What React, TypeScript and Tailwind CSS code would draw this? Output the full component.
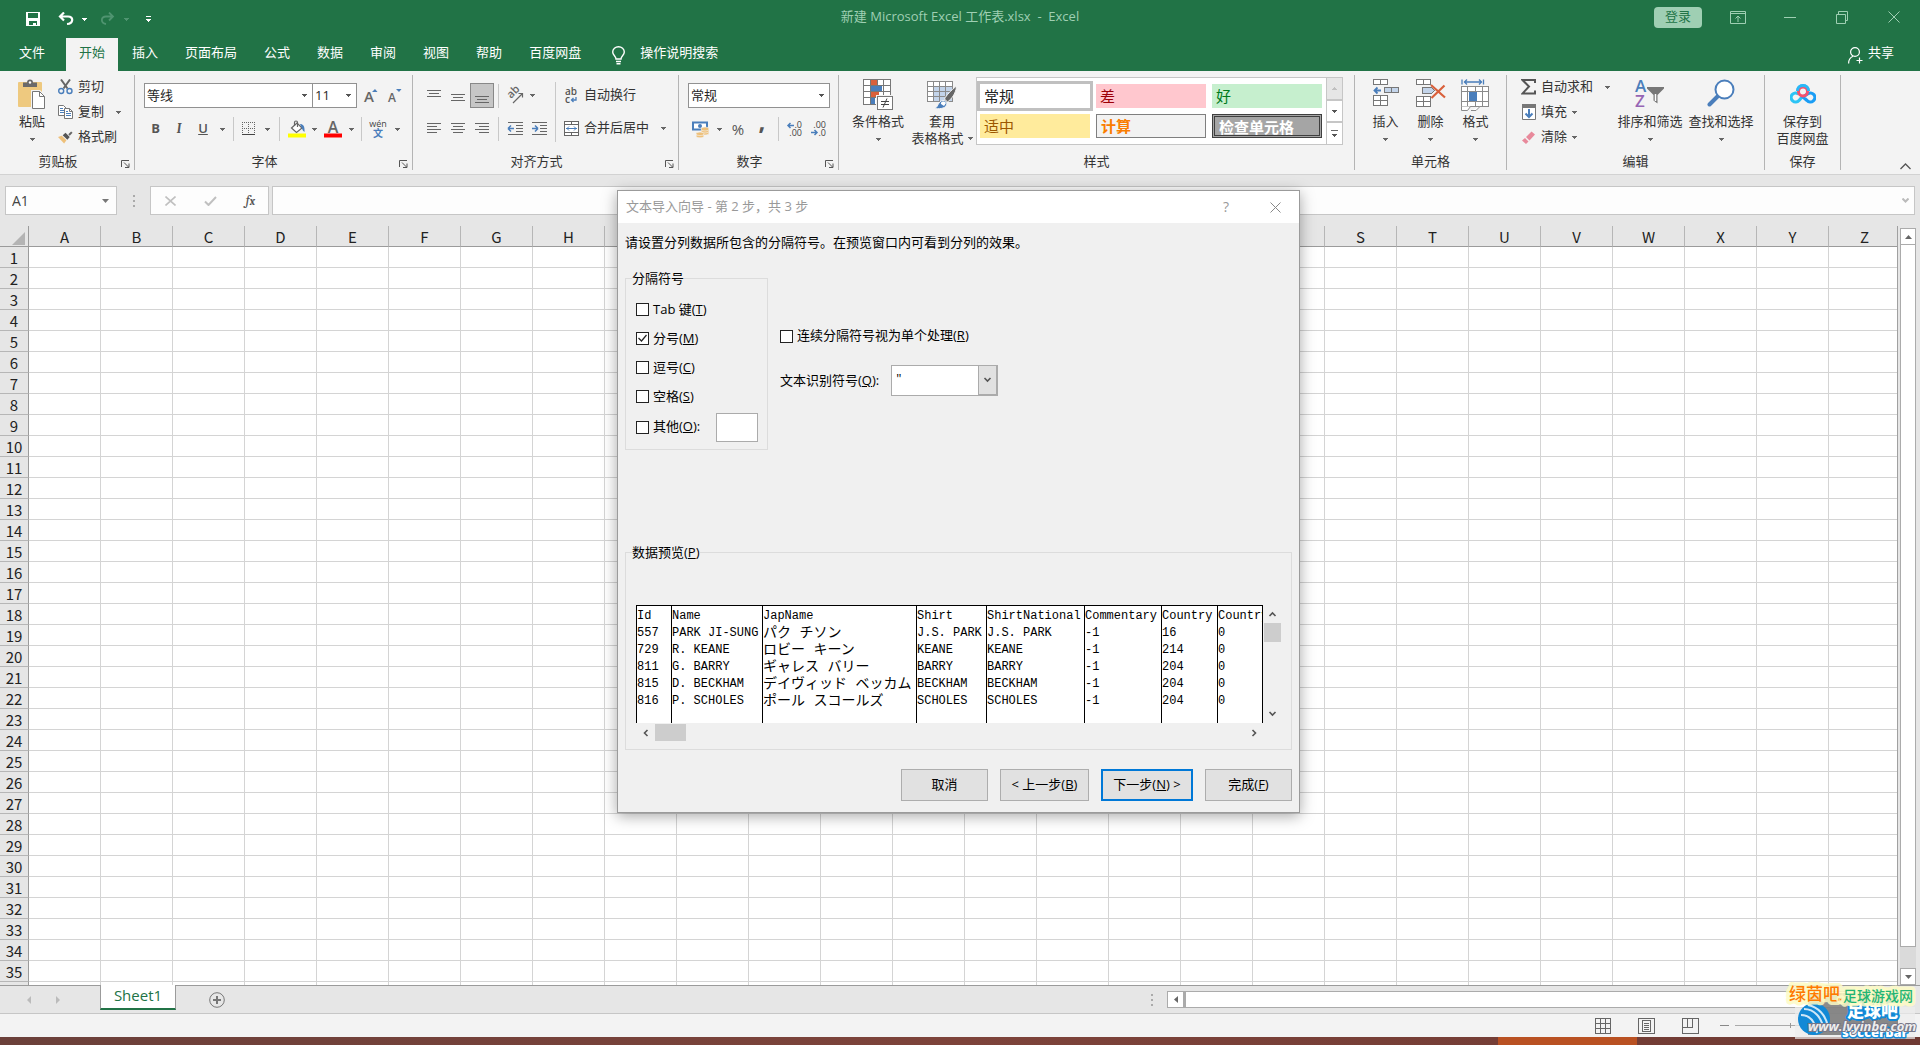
import type { ReactNode } from 'react'
import { clsx } from 'clsx'

const TABS = ['插入', '页面布局', '公式', '数据', '审阅', '视图', '帮助', '百度网盘']
const COLUMNS = 'ABCDEFGHIJKLMNOPQRSTUVWXYZ'.split('')
const ROWS = Array.from({ length: 36 }, (_, i) => i + 1)

const PREVIEW_HEAD = ['Id', 'Name', 'JapName', 'Shirt', 'ShirtNational', 'Commentary', 'Country', 'Country2']
const PREVIEW_ROWS = [
  ['557', 'PARK JI-SUNG', 'パク チソン', 'J.S. PARK', 'J.S. PARK', '-1', '16', '0'],
  ['729', 'R. KEANE', 'ロビー キーン', 'KEANE', 'KEANE', '-1', '214', '0'],
  ['811', 'G. BARRY', 'ギャレス バリー', 'BARRY', 'BARRY', '-1', '204', '0'],
  ['815', 'D. BECKHAM', 'デイヴィッド ベッカム', 'BECKHAM', 'BECKHAM', '-1', '204', '0'],
  ['816', 'P. SCHOLES', 'ポール スコールズ', 'SCHOLES', 'SCHOLES', '-1', '204', '0'],
]
const PREVIEW_WIDTHS = ['w-[35px]', 'w-[91px]', 'w-[154px]', 'w-[70px]', 'w-[98px]', 'w-[77px]', 'w-[56px]', 'w-[46px]']

const DELIMITERS = [
  { id: 'tab', label: 'Tab 键', hotkey: 'T', checked: false },
  { id: 'semicolon', label: '分号', hotkey: 'M', checked: true },
  { id: 'comma', label: '逗号', hotkey: 'C', checked: false },
  { id: 'space', label: '空格', hotkey: 'S', checked: false },
]

type Cls = { className?: string }

function Caret({ className = 'text-[#666]' }: Cls) {
  return (
    <svg className={clsx('shrink-0', className)} width="5" height="3" viewBox="0 0 5 3" shapeRendering="crispEdges">
      <path d="M0 0h5v1h-1v1h-1v1h-1v-1h-1v-1h-1z" fill="currentColor" />
    </svg>
  )
}

function Sep({ className = 'h-6' }: Cls) {
  return <div className={clsx('w-px bg-[#c8c8c8] shrink-0', className)} />
}

function ToolButton({ title, className = 'w-6', children }: { title: string; className?: string; children: ReactNode }) {
  return (
    <button aria-label={title} className={clsx('h-full shrink-0 flex items-center justify-center', className)}>
      {children}
    </button>
  )
}

function Combo({ label, value, className }: { label: string; value: string; className: string }) {
  return (
    <div className={clsx('relative h-[25px] border border-[#919191] bg-white', className)}>
      <select aria-label={label} className="appearance-none w-full h-full pl-[2px] text-[13px] text-[#262626] outline-none">
        <option>{value}</option>
      </select>
      <Caret className="absolute right-[5px] top-[10px] text-[#555] pointer-events-none" />
    </div>
  )
}

function Group({ label, className, launcher, children }: { label: string; className: string; launcher?: boolean; children: ReactNode }) {
  return (
    <section className={clsx('relative shrink-0 flex flex-col border-r border-[#b4b4b4]', className)}>
      <div className="flex-1 flex">{children}</div>
      <h2 className={clsx('h-[18px] leading-[18px] text-center', launcher && 'pr-[18px]')}>{label}</h2>
      {launcher && (
        <button aria-label={`${label}设置`} className="absolute right-1 bottom-[2px]">
          <svg width="9" height="8" viewBox="0 0 9 8" fill="none" stroke="#555">
            <path d="M.5 7V.5H8M3 2.500l4.500 4.500M8 3.500v4H4" />
          </svg>
        </button>
      )}
    </section>
  )
}

function BigButton({ icon, lines, className, caret = 'below' }: { icon: ReactNode; lines: string[]; className: string; caret?: 'below' | 'inline' | 'none' }) {
  return (
    <button className={clsx('shrink-0 flex flex-col items-center pt-1', className)}>
      <span className="h-[34px] flex items-start justify-center">{icon}</span>
      {lines.map((line, i) => (
        <span key={line} className="h-[17px] leading-[17px] whitespace-nowrap flex items-center gap-1">
          {line}
          {caret === 'inline' && i === lines.length - 1 && <Caret />}
        </span>
      ))}
      {caret === 'below' && <Caret className="mt-[8px] text-[#666]" />}
    </button>
  )
}

function SmallButton({ icon, label, caret }: { icon: ReactNode; label: string; caret?: string }) {
  return (
    <button className="h-[24px] mb-px flex items-center gap-[5px]">
      <span className="w-[15px] flex justify-center">{icon}</span>
      {label}
      {caret && <Caret className={caret} />}
    </button>
  )
}

/* Text lines; widths picked by alignment */
function LinesIcon({ d }: { d: string }) {
  return (
    <svg width="14" height="14" viewBox="0 0 14 14" stroke="#666" shapeRendering="crispEdges">
      <path d={d} />
    </svg>
  )
}

function PasteIcon() {
  return (
    <svg width="28" height="31" viewBox="0 0 28 31">
      <rect y="3" width="24" height="25" rx="1" fill="#eec97f" />
      <path d="M5 8V3.500h4a3 3 0 0 1 6 0h4V8z" fill="#6a6a6a" />
      <circle cx="12" cy="3.500" r="1.200" fill="#fff" />
      <path d="M13 11h9l6 6v14H13z" fill="#f3f3f3" />
      <path d="M14.500 12.500h7l5 5v12h-12z" fill="#fff" stroke="#777" />
      <path d="M21.500 12.500v5h5" fill="none" stroke="#777" />
    </svg>
  )
}

function CutIcon() {
  return (
    <svg width="15" height="16" viewBox="0 0 15 16" fill="none">
      <path d="M3 0.500l6.500 9M12 .500L5.500 9.500" stroke="#666" strokeWidth="2" />
      <circle cx="3.200" cy="12" r="2.500" stroke="#4a7ebb" strokeWidth="1.400" />
      <circle cx="11.500" cy="12" r="2.500" stroke="#4a7ebb" strokeWidth="1.400" />
    </svg>
  )
}

function CopyIcon() {
  return (
    <svg width="15" height="14" viewBox="0 0 15 14" fill="#fff" stroke="#777">
      <path d="M.5.5h5l3 3v7h-8z" />
      <path d="M2 3.500h3M2 5.500h4M2 7.500h4" stroke="#4a7ebb" />
      <path d="M6.500 3.500h5l3 3v7h-8z" />
      <path d="M11.500 3.500v3h3" fill="none" />
      <path d="M8 6.500h2M8 8.500h5M8 10.500h5" stroke="#4a7ebb" />
    </svg>
  )
}

function BrushIcon() {
  return (
    <svg width="16" height="15" viewBox="0 0 16 15">
      <path d="M0 7l4-1.500 5 5L6.500 14z" fill="#eec07a" />
      <path d="M5 5l3-2.500 4.500 4.500L10 10z" fill="#555" />
      <path d="M11 4l3-3 1.500 1.500-3 3z" fill="#666" />
    </svg>
  )
}

function FontSizeIcon({ up }: { up: boolean }) {
  return (
    <svg className="overflow-visible" width="16" height="16" viewBox="0 0 16 16">
      <text x="1" y="14" fontSize={up ? 15 : 12} fontWeight="600" fill="#666" fontFamily="Open Sans">A</text>
      <path d={up ? 'M9 4l3-3 2.500 3z' : 'M9 1l3 3 2.500-3z'} fill="#4a7ebb" />
    </svg>
  )
}

function BorderIcon() {
  return (
    <svg width="14" height="14" viewBox="0 0 14 14" stroke="#666" shapeRendering="crispEdges">
      <path d="M0 .500h14M0 6.500h14M.500 0v12M6.500 0v12M12.500 0v12" strokeDasharray="1 1" />
      <path d="M0 12.500h13" stroke="#444" />
    </svg>
  )
}

function FillIcon() {
  return (
    <svg width="18" height="18" viewBox="0 0 18 18">
      <path d="M3.500 8l5.500-5 5 5-5.500 4.500z" fill="#fff" stroke="#666" strokeWidth="1.200" />
      <path d="M6.500 6V2.500a1.500 1.500 0 0 1 3 0V7" fill="none" stroke="#666" strokeWidth="1.200" />
      <path d="M12 4c3 0 5 2 4.500 8-2-1-2-3-3-4.500z" fill="#4a7ebb" />
      <path d="M0 13.500h18v4H0z" fill="#ff0" />
    </svg>
  )
}

function FontColorIcon() {
  return (
    <svg className="overflow-visible" width="18" height="18" viewBox="0 0 18 18">
      <text x="9" y="13" textAnchor="middle" fontSize="16" fontWeight="600" fill="#666" fontFamily="Open Sans">A</text>
      <path d="M0 13.500h18v4H0z" fill="#f00" />
    </svg>
  )
}

function PhoneticIcon() {
  return (
    <svg className="overflow-visible" width="18" height="20" viewBox="0 0 18 20">
      <text x="9" y="8" textAnchor="middle" fontSize="9" fill="#444" fontFamily="Open Sans">wén</text>
      <text x="9" y="18" textAnchor="middle" fontSize="10" fontWeight="700" fill="#4a7ebb" fontFamily="Noto Sans CJK SC">文</text>
    </svg>
  )
}

function IndentIcon({ out }: { out?: boolean }) {
  return (
    <svg width="16" height="14" viewBox="0 0 16 14" stroke="#666" shapeRendering="crispEdges">
      <path d="M1 .500h15M9 3.500h7M9 6.500h7M9 9.500h7M1 12.500h15" />
      <path d={out ? 'M1 6.500h6M1 6.500l3-3M1 6.500l3 3' : 'M1 6.500h6M7 6.500l-3-3M7 6.500l-3 3'} stroke="#4a7ebb" strokeWidth="1.500" shapeRendering="auto" fill="none" />
    </svg>
  )
}

function OrientationIcon() {
  return (
    <svg className="overflow-visible" width="17" height="16" viewBox="0 0 17 16">
      <text transform="translate(4 11) rotate(-45)" fontSize="11" fontWeight="600" fill="#666" fontFamily="Open Sans">ab</text>
      <path d="M6 15l9.500-9.500M11.500 5.500h4v4" fill="none" stroke="#666" strokeWidth="1.200" />
    </svg>
  )
}

function WrapIcon() {
  return (
    <svg className="overflow-visible" width="14" height="17" viewBox="0 0 14 17">
      <text x="1" y="8" fontSize="10" fontWeight="600" fill="#555" fontFamily="Open Sans">ab</text>
      <text x="1" y="16" fontSize="10" fontWeight="600" fill="#555" fontFamily="Open Sans">c</text>
      <path d="M12 10v3H7.500M9.500 11l-2 2 2 2" fill="none" stroke="#4a7ebb" strokeWidth="1.300" />
    </svg>
  )
}

function MergeIcon() {
  return (
    <svg width="15" height="15" viewBox="0 0 15 15" fill="#fff" stroke="#666" shapeRendering="crispEdges">
      <path d="M.5.5h14v14H.5zM.5 3.500h14M.5 11.500h14M7.500.5v3M7.500 11.500v3" />
      <path d="M2 7.500h11M5 5.500l-2 2 2 2M10 5.500l2 2-2 2" fill="none" stroke="#4a7ebb" shapeRendering="auto" />
    </svg>
  )
}

function CurrencyIcon() {
  return (
    <svg width="17" height="17" viewBox="0 0 17 17">
      <rect x="1" y="1.500" width="14" height="7" fill="#fff" stroke="#4a7ebb" strokeWidth="2" />
      <circle cx="8" cy="5" r="2" fill="#4a7ebb" />
      <g fill="#eec07a" stroke="#f3f3f3" strokeWidth=".6">
        <ellipse cx="13" cy="12" rx="4" ry="2" />
        <ellipse cx="13" cy="10" rx="4" ry="2" />
        <ellipse cx="13" cy="8" rx="4" ry="2" />
        <ellipse cx="8" cy="15" rx="4" ry="1.800" />
        <ellipse cx="8" cy="12.800" rx="4" ry="1.800" />
      </g>
    </svg>
  )
}

function DecimalIcon({ more }: { more?: boolean }) {
  return (
    <svg className="overflow-visible" width="16" height="16" viewBox="0 0 16 16">
      <g fontSize="9" fill="#444" fontFamily="Open Sans">
        <text x="15" y="7" textAnchor="end">{more ? '.0' : '.00'}</text>
        <text x="15" y="15" textAnchor="end">{more ? '.00' : '.0'}</text>
      </g>
      <path d={more ? 'M1 4.500h6M3.500 2l-2.500 2.500L3.500 7' : 'M0 11.500h6M3.500 9l2.500 2.500L3.500 14'} fill="none" stroke="#4a7ebb" strokeWidth="1.500" />
    </svg>
  )
}

function ConditionalIcon() {
  return (
    <svg width="30" height="31" viewBox="0 0 30 31" shapeRendering="crispEdges">
      <path d="M.5.5h27v25H.5z" fill="#fff" />
      <path d="M8 1h6v5H8zM8 13h8v5H8z" fill="#d9603b" />
      <path d="M8 7h11v5H8zM8 19h4v6H8z" fill="#4a7ebb" />
      <path d="M.5.5h27v25H.5zM7.500.5v25M14.500.5v6M20.500.5v25M.5 6.500h27M.5 12.500h27M.5 18.500h27" fill="none" stroke="#777" />
      <path d="M13 16h17v15H13z" fill="#f3f3f3" />
      <path d="M14.500 17.500h15v13h-15z" fill="#fff" stroke="#777" />
      <path d="M18 22.500h8M18 25.500h8M24 19.500l-4 9" stroke="#444" shapeRendering="auto" />
    </svg>
  )
}

function TableFormatIcon() {
  return (
    <svg width="30" height="30" viewBox="0 0 30 30">
      <g shapeRendering="crispEdges">
        <path d="M.5 2.500h25v20H.5z" fill="#fff" />
        <path d="M7 8h18v15H7z" fill="#c3d4ea" />
        <path d="M.5 2.500h25v20H.5zM6.500 2.500v20M12.500 2.500v20M18.500 2.500v20M.5 7.500h25M.5 12.500h25M.5 17.500h25" fill="none" stroke="#8a8a8a" />
      </g>
      <path d="M29.500 7c-6 5-10 9-12 13l3 3c4-3 8-8 9-15z" fill="#666" stroke="#f3f3f3" />
      <path d="M7 29.500c4 0 4-8 9-8 3 0 4.500 2 3.500 4.500-1.500 4-8 4-12.500 3.500z" fill="#4a7ebb" stroke="#f3f3f3" />
      <path d="M14 25a2.500 2 0 0 1 5-1l-2 3z" fill="#fff" />
    </svg>
  )
}

function InsertCellsIcon() {
  return (
    <svg width="26" height="28" viewBox="0 0 26 28" fill="#fff" stroke="#777" shapeRendering="crispEdges">
      <path d="M.5.5h14v5H.5zM7.500.5v5M.5 16.500h14v10H.5zM7.500 16.500v10M.5 21.500h14" />
      <path d="M11.500 8.500h14v5h-14zM18.500 8.500v5" fill="#c3d4ea" />
      <path d="M2 11.500h6M4.500 8.500l-3 3 3 3" fill="none" stroke="#4a7ebb" strokeWidth="1.800" shapeRendering="auto" />
    </svg>
  )
}

function DeleteCellsIcon() {
  return (
    <svg width="30" height="28" viewBox="0 0 30 28" fill="#fff" stroke="#777" shapeRendering="crispEdges">
      <path d="M.5.5h14v5H.5zM7.500.5v5M.5 17.500h14v10H.5zM7.500 17.500v10M.5 22.500h14" />
      <path d="M6.500 8.500h9l3 3-3 3h-9z" fill="#c3d4ea" />
      <path d="M15 6l14 12.500M28.500 6.500L15.500 19" stroke="#d9603b" strokeWidth="2.200" shapeRendering="auto" />
    </svg>
  )
}

function FormatCellsIcon() {
  return (
    <svg width="29" height="32" viewBox="0 0 29 32" fill="none" stroke="#8a8a8a">
      <path d="M1 .500v5M22.500.500v5M3 3h18M6 .500L3.500 3 6 5.500M18 .500L20.500 3 18 5.500" stroke="#4a7ebb" strokeWidth="1.300" />
      <g shapeRendering="crispEdges">
        <path d="M.5 7.500h27v20H.5z" fill="#fff" />
        <path d="M6.500 7.500v20M14.500 7.500v20M21.500 7.500v20M.5 12.500h27M.5 22.500h27" />
        <path d="M8 13h8v9H8z" fill="#4a7ebb" stroke="none" />
      </g>
      <path d="M.5 27.500v4h6l3-4M10 31.500h5l4-4" fill="#fff" />
    </svg>
  )
}

function SortIcon() {
  return (
    <svg className="overflow-visible" width="30" height="31" viewBox="0 0 30 31">
      <text x="0" y="13" fontSize="17" fontWeight="600" fill="#4a7ebb" fontFamily="Open Sans">A</text>
      <text x="0" y="28" fontSize="17" fontWeight="600" fill="#9665b4" fontFamily="Open Sans">Z</text>
      <path d="M12 8h17v1.500L22.500 16v8.500l-4-3V16L12 9.500z" fill="#777" />
      <path d="M20.500 15v7" stroke="#fff" strokeWidth="1.500" />
    </svg>
  )
}

function FindIcon() {
  return (
    <svg width="28" height="30" viewBox="0 0 28 30" fill="none" stroke="#4a7ebb">
      <path d="M2.500 25.500l9-9" strokeWidth="4" strokeLinecap="round" />
      <circle cx="17.500" cy="10.500" r="9" fill="#fff" strokeWidth="2" />
    </svg>
  )
}

function NetdiskIcon() {
  return (
    <svg width="26" height="21" viewBox="0 0 26 21" fill="none" strokeWidth="3.200">
      <path d="M7.500 8a5.500 5.500 0 0 1 11 0" stroke="#2bb8f7" />
      <path d="M12.500 13.500l-3.500 4a4.500 4.500 0 1 1-.500-6.500" stroke="#2cc4f5" />
      <path d="M17.500 11l-4.500 3 4 3.500a4.500 4.500 0 1 0 .500-6.500" stroke="#1a9df5" />
      <circle cx="13" cy="8.500" r="4.500" stroke="#f5526d" strokeWidth="3" />
      <path d="M7.500 8a5.500 5.500 0 0 1 11 0" stroke="#2bb8f7" strokeWidth="2.800" />
    </svg>
  )
}

function TitleBar() {
  return (
    <header className="h-[38px] grid grid-cols-3 items-center text-[13px] text-[#9fcfb3]">
      <div className="flex items-center pl-[26px]">
        <button aria-label="保存">
          <svg width="14" height="14" viewBox="0 0 14 14" shapeRendering="crispEdges">
            <path d="M0 0h14v14H0z" fill="#fff" />
            <path d="M2 1h10v5H2zM3 9h8v4h-1v-2H7v2H3z" fill="#217346" />
          </svg>
        </button>
        <button aria-label="撤消" className="ml-[18px] flex items-center gap-2 text-white">
          <svg width="16" height="14" viewBox="0 0 16 14" fill="none" stroke="#fff" strokeWidth="2.200">
            <path d="M6 .500L2 4.500l4 4M2 4.500h8c6 0 5.500 7-1 7.500" />
          </svg>
          <Caret className="text-white" />
        </button>
        <button aria-label="恢复" className="ml-[13px] flex items-center gap-2">
          <svg width="16" height="14" viewBox="0 0 16 14" fill="none" stroke="#4f9470" strokeWidth="1.800">
            <path d="M9 .500l4 4-4 4M13 4.500H6c-5.500 0-5.500 6.500 0 7.500" />
          </svg>
          <Caret className="text-[#4f9470]" />
        </button>
        <button aria-label="自定义快速访问工具栏" className="ml-[17px] flex flex-col items-center gap-[2px] text-white">
          <span className="w-[5px] h-px bg-white" />
          <Caret className="text-white" />
        </button>
      </div>
      <h1 className="text-center pb-[5px] whitespace-pre">新建 Microsoft Excel 工作表.xlsx  -  Excel</h1>
      <div className="flex items-center justify-end pr-[20px] pb-1">
        <button className="w-12 h-[21px] rounded-sm bg-[#9fcfb3] text-[#217346] mr-[28px]">登录</button>
        <button aria-label="功能区显示选项" className="mr-[38px]">
          <svg width="16" height="13" viewBox="0 0 16 13" fill="none" stroke="currentColor">
            <path d="M.5.500h15v12H.5zM.5 2.500h15M8 11V5M5.500 7.500L8 5l2.500 2.500" />
          </svg>
        </button>
        <button aria-label="最小化" className="mr-[40px] w-3 h-px bg-[#9fcfb3]" />
        <button aria-label="还原" className="mr-[40px]">
          <svg width="12" height="13" viewBox="0 0 12 13" fill="none" stroke="currentColor">
            <path d="M.5 3.500h9v9h-9zM2.500 3V.500h9v9H10" />
          </svg>
        </button>
        <button aria-label="关闭">
          <svg width="12" height="12" viewBox="0 0 12 12" stroke="currentColor"><path d="M.500.500l11 11M11.500.500l-11 11" /></svg>
        </button>
      </div>
    </header>
  )
}

function TabBar() {
  return (
    <nav className="h-[33px] flex items-stretch gap-px text-[13px] text-white *:pb-[3px]">
      <button className="w-[65px] pl-[19px] text-left">文件</button>
      <button className="px-[13px] bg-[#f3f3f3] text-[#217346]">开始</button>
      {TABS.map(tab => (
        <button key={tab} className="px-[13px]">{tab}</button>
      ))}
      <button className="ml-[17px] flex items-center gap-[15px]">
        <svg className="mt-1" width="13" height="19" viewBox="0 0 13 19" fill="none" stroke="#fff" strokeWidth="1.400">
          <path d="M4 13c0-3-3.300-3.500-3.300-7a5.800 5.300 0 0 1 11.600 0c0 3.500-3.300 4-3.300 7z" />
          <path d="M4 15.500h5M4.500 17.800h4" />
        </svg>
        操作说明搜索
      </button>
      <button className="ml-auto mr-[26px] flex items-center gap-[5px]">
        <svg className="mt-1" width="15" height="17" viewBox="0 0 15 17" fill="none" stroke="#fff" strokeWidth="1.200">
          <circle cx="7" cy="5" r="4.400" />
          <path d="M.600 16.500c0-4 1.500-6 4.500-7.200M8.500 13.500h6M11.500 10.500v6" />
        </svg>
        共享
      </button>
    </nav>
  )
}

const SCROLL_BTN = 'flex-1 flex items-center justify-center border border-[#c6c6c6]'

function Ribbon() {
  return (
    <div className="h-[104px] pt-1 pb-1 flex text-[13px] text-[#333] bg-[#f3f3f3] border-b border-[#d2d2d2] relative">
      <Group label="剪贴板" className="w-[135px]" launcher>
        <BigButton className="w-[42px] ml-[11px]" icon={<PasteIcon />} lines={['粘贴']} />
        <div className="ml-[5px]">
          <SmallButton icon={<CutIcon />} label="剪切" />
          <SmallButton icon={<CopyIcon />} label="复制" caret="ml-[7px] text-[#666]" />
          <SmallButton icon={<BrushIcon />} label="格式刷" />
        </div>
      </Group>

      <Group label="字体" className="w-[278px]" launcher>
        <div className="pt-2 pl-[9px]">
          <div className="flex items-center">
            <Combo label="字体" value="等线" className="w-[169px]" />
            <Combo label="字号" value="11" className="w-[45px] -ml-px" />
            <ToolButton title="增大字号" className="w-6 ml-[2px]"><FontSizeIcon up /></ToolButton>
            <ToolButton title="减小字号"><FontSizeIcon up={false} /></ToolButton>
          </div>
          <div className="flex items-center h-6 mt-[9px] text-[#555]">
            <ToolButton title="加粗" className="w-[23px]"><b>B</b></ToolButton>
            <ToolButton title="倾斜"><i className="font-serif font-bold">I</i></ToolButton>
            <ToolButton title="下划线"><u className="font-semibold">U</u></ToolButton>
            <ToolButton title="下划线选项" className="w-[14px]"><Caret /></ToolButton>
            <Sep className="h-6 mx-1" />
            <ToolButton title="边框" className="w-[22px]"><BorderIcon /></ToolButton>
            <ToolButton title="边框选项" className="w-[15px]"><Caret /></ToolButton>
            <Sep className="h-6 mx-1" />
            <ToolButton title="填充颜色" className="w-[25px]"><FillIcon /></ToolButton>
            <ToolButton title="填充颜色选项" className="w-[11px]"><Caret /></ToolButton>
            <ToolButton title="字体颜色" className="w-[26px]"><FontColorIcon /></ToolButton>
            <ToolButton title="字体颜色选项" className="w-[11px]"><Caret /></ToolButton>
            <Sep className="h-6 mx-1" />
            <ToolButton title="拼音" className="w-6"><PhoneticIcon /></ToolButton>
            <ToolButton title="拼音选项" className="w-[14px]"><Caret /></ToolButton>
          </div>
        </div>
      </Group>

      <Group label="对齐方式" className="w-[266px]" launcher>
        <div className="pt-2 pl-[9px]">
          <div className="flex items-center h-[25px]">
            <ToolButton title="顶端对齐"><LinesIcon d="M0 1.500h14M2 4.500h10M0 7.500h14" /></ToolButton>
            <ToolButton title="垂直居中"><LinesIcon d="M0 5.500h14M2 8.500h10M0 11.500h14" /></ToolButton>
            <ToolButton title="底端对齐" className="w-6 bg-[#c6c6c6] border border-[#888]">
              <LinesIcon d="M0 7.500h14M2 10.500h10M0 13.500h14" />
            </ToolButton>
            <Sep className="h-6 mx-1" />
            <ToolButton title="方向"><OrientationIcon /></ToolButton>
            <ToolButton title="方向选项" className="w-[10px]"><Caret /></ToolButton>
          </div>
          <div className="flex items-center h-6 mt-[9px]">
            <ToolButton title="左对齐"><LinesIcon d="M0 1.500h14M0 4.500h10M0 7.500h14M0 10.500h10" /></ToolButton>
            <ToolButton title="居中"><LinesIcon d="M0 1.500h14M2 4.500h10M0 7.500h14M2 10.500h10" /></ToolButton>
            <ToolButton title="右对齐"><LinesIcon d="M0 1.500h14M4 4.500h10M0 7.500h14M4 10.500h10" /></ToolButton>
            <Sep className="h-6 mx-1" />
            <ToolButton title="减少缩进量"><IndentIcon out /></ToolButton>
            <ToolButton title="增加缩进量"><IndentIcon /></ToolButton>
          </div>
        </div>
        <Sep className="h-[60px] mt-[7px] ml-1" />
        <div className="pt-2 pl-2">
          <button className="h-6 flex items-center gap-[6px]"><WrapIcon />自动换行</button>
          <button className="h-6 mt-[9px] flex items-center gap-[5px]"><MergeIcon />合并后居中<Caret className="ml-[7px] text-[#666]" /></button>
        </div>
      </Group>

      <Group label="数字" className="w-[160px]" launcher>
        <div className="pt-2 pl-[9px]">
          <Combo label="数字格式" value="常规" className="w-[142px]" />
          <div className="flex items-center h-6 mt-[9px] text-[#555]">
            <ToolButton title="会计数字格式"><CurrencyIcon /></ToolButton>
            <ToolButton title="会计数字格式选项" className="w-[14px]"><Caret /></ToolButton>
            <ToolButton title="百分比样式"><span className="text-[15px]">%</span></ToolButton>
            <ToolButton title="千位分隔样式"><span className="text-2xl leading-3 pb-4 font-bold">,</span></ToolButton>
            <Sep className="h-6 mx-1" />
            <ToolButton title="增加小数位数"><DecimalIcon more /></ToolButton>
            <ToolButton title="减少小数位数"><DecimalIcon /></ToolButton>
          </div>
        </div>
      </Group>

      <Group label="样式" className="w-[516px]">
        <BigButton className="w-[62px] ml-[8px]" icon={<ConditionalIcon />} lines={['条件格式']} />
        <BigButton className="w-[62px] ml-[2px]" icon={<TableFormatIcon />} lines={['套用', '表格格式']} caret="inline" />
        <div className="ml-[3px] mt-[2px] h-[68px] w-[367px] flex bg-white border border-[#c6c6c6] text-[15px]">
          <div className="flex-1 grid grid-cols-3 grid-rows-2 gap-[6px] pl-[3px] pr-1 py-[6px] text-left *:px-1 *:text-left *:leading-5">
            <button className="bg-white text-[#222] outline-3 outline-[#c0c0c0]">常规</button>
            <button className="bg-[#ffc7ce] text-[#9c0006]">差</button>
            <button className="bg-[#c6efce] text-[#007a1c]">好</button>
            <button className="bg-[#ffeb9c] text-[#9c5700]">适中</button>
            <button className="bg-[#f2f2f2] text-[#fa7d00] font-bold border border-[#7f7f7f]">计算</button>
            <button className="bg-[#a5a5a5] text-white font-bold border-3 border-double border-[#3f3f3f]">检查单元格</button>
          </div>
          <div className="w-[17px] -my-px -mr-px flex flex-col">
            <button aria-label="上一行" className={clsx(SCROLL_BTN, 'bg-[#e6e6e6]')}><Caret className="rotate-180 text-[#c0c0c0]" /></button>
            <button aria-label="下一行" className={SCROLL_BTN}><Caret className="text-[#555]" /></button>
            <button aria-label="其他样式" className={clsx(SCROLL_BTN, 'flex-col gap-[3px]')}>
              <span className="w-[7px] h-px bg-[#666]" />
              <Caret className="text-[#555]" />
            </button>
          </div>
        </div>
      </Group>

      <Group label="单元格" className="w-[152px]">
        <BigButton className="w-[45px] ml-2" icon={<InsertCellsIcon />} lines={['插入']} />
        <BigButton className="w-[45px]" icon={<DeleteCellsIcon />} lines={['删除']} />
        <BigButton className="w-[45px]" icon={<FormatCellsIcon />} lines={['格式']} />
      </Group>

      <Group label="编辑" className="w-[258px]">
        <div className="ml-[14px] w-[90px]">
          <SmallButton
            icon={<svg width="15" height="16" viewBox="0 0 15 16" fill="none" stroke="#555" strokeWidth="2"><path d="M14 4V1H1.500L8 7.500 1.500 14.500H14v-3" /></svg>}
            label="自动求和"
            caret="ml-[7px] text-[#666]"
          />
          <SmallButton
            icon={<svg width="14" height="16" viewBox="0 0 14 16"><path d="M.5.5h13v15H.5z" fill="#fff" stroke="#777" /><path d="M0 0h14v4H0z" fill="#777" /><path d="M7 5v8M3.500 9.500L7 13l3.500-3.500" fill="none" stroke="#4a7ebb" strokeWidth="2" /></svg>}
            label="填充"
            caret="text-[#666]"
          />
          <SmallButton
            icon={<svg width="13" height="13" viewBox="0 0 13 13" fill="#e8899b"><path d="M4 6l5.500-5.500L13 3.500 7.500 9.500zM3 7l3.500 3.500L4 13 0 9.500z" /></svg>}
            label="清除"
            caret="text-[#666]"
          />
        </div>
        <BigButton className="w-[68px] ml-[5px]" icon={<SortIcon />} lines={['排序和筛选']} />
        <BigButton className="w-[68px] ml-[3px]" icon={<FindIcon />} lines={['查找和选择']} />
      </Group>

      <Group label="保存" className="w-[76px]">
        <BigButton className="w-full" icon={<span className="pt-1"><NetdiskIcon /></span>} lines={['保存到', '百度网盘']} caret="none" />
      </Group>

      <button aria-label="折叠功能区" className="ml-auto self-end mr-[9px]">
        <svg width="11" height="7" viewBox="0 0 11 7" fill="none" stroke="#555" strokeWidth="1.300"><path d="M.500 6L5.500 1l5 5" /></svg>
      </button>
    </div>
  )
}

function FormulaBar() {
  return (
    <div className="h-[51px] pt-[11px] px-[5px] flex items-start *:h-[29px]">
      <div className="w-[112px] flex items-center border border-[#c6c6c6] bg-[#fdfdfd]">
        <input aria-label="名称框" defaultValue="A1" className="flex-1 min-w-0 pl-[6px] text-sm text-[#444] outline-none" />
        <svg className="mr-[7px]" width="7" height="4" viewBox="0 0 7 4"><path d="M0 0h7L3.500 4z" fill="#777" /></svg>
      </div>
      <div className="w-[33px] flex flex-col items-center justify-center gap-[3px] *:w-[2px] *:h-[2px] *:bg-[#aaa]">
        <i /><i /><i />
      </div>
      <div className="w-[119px] flex items-center justify-between pl-[14px] pr-[13px] border border-[#c6c6c6] bg-[#fdfdfd]">
        <button aria-label="取消"><svg width="11" height="10" viewBox="0 0 11 10" stroke="#c0c0c0" strokeWidth="1.600"><path d="M.500.500l10 9M10.500.500l-10 9" /></svg></button>
        <button aria-label="输入"><svg width="13" height="10" viewBox="0 0 13 10" fill="none" stroke="#c0c0c0" strokeWidth="2"><path d="M1 5.500L4.500 9 12 1" /></svg></button>
        <button aria-label="插入函数" className="font-serif italic text-[15px] leading-none text-[#555]">f<span className="text-[11px] font-bold">x</span></button>
      </div>
      <div className="flex-1 ml-[3px] flex items-center border border-[#c6c6c6] bg-[#fdfdfd]">
        <input aria-label="编辑栏" className="flex-1 outline-none" />
        <svg className="mr-[5px]" width="7" height="5" viewBox="0 0 7 5" fill="none" stroke="#bbb" strokeWidth="2"><path d="M.500.500l3 3 3-3" /></svg>
      </div>
    </div>
  )
}

function Sheet() {
  return (
    <div className="flex-1 min-h-0 flex">
      <div className="flex-1 overflow-hidden border-r border-[#a0a0a0]">
        <table className="w-[1901px] table-fixed border-separate border-spacing-0 text-[15px] leading-none text-[#222] font-['Noto_Sans_CJK_SC',sans-serif]">
          <thead>
            <tr className="h-[21px] bg-[#e6e6e6]">
              <th className="w-[29px] border-b border-r border-[#9b9b9b] p-0">
                <svg className="ml-auto mr-[3px] mt-1" width="13" height="13" viewBox="0 0 13 13"><path d="M13 0v13H0z" fill="#b4b4b4" /></svg>
              </th>
              {COLUMNS.map(col => (
                <th key={col} className="w-[72px] p-0 font-normal border-b border-b-[#9b9b9b] border-r border-r-[#b6b6b6]">{col}</th>
              ))}
            </tr>
          </thead>
          <tbody>
            {ROWS.map(row => (
              <tr key={row} className="h-[21px]">
                <th className="p-0 font-normal bg-[#e6e6e6] border-b border-b-[#b6b6b6] border-r border-r-[#9b9b9b]">{row}</th>
                {COLUMNS.map(col => (
                  <td key={col} className="p-0 bg-white border-r border-b border-[#d4d4d4]" />
                ))}
              </tr>
            ))}
          </tbody>
        </table>
      </div>
      <div className="w-[22px] pl-[2px] pr-1 pt-[2px] flex flex-col">
        <button aria-label="向上滚动" className="h-[17px] flex items-center justify-center border border-[#ababab] bg-white">
          <svg width="7" height="4" viewBox="0 0 7 4"><path d="M0 4h7L3.500 0z" fill="#666" /></svg>
        </button>
        <div className="flex-1 flex flex-col bg-[#dadada]">
          <div className="flex-1 mb-[21px] bg-white border border-t-0 border-[#ababab]" />
        </div>
        <button aria-label="向下滚动" className="h-[17px] flex items-center justify-center border border-[#ababab] bg-white">
          <svg width="7" height="4" viewBox="0 0 7 4"><path d="M0 0h7L3.500 4z" fill="#666" /></svg>
        </button>
      </div>
    </div>
  )
}

function SheetTabs() {
  return (
    <div className="h-[29px] flex border-t border-t-[#9b9b9b] border-b border-b-[#c6c6c6]">
      <div className="w-[100px] pl-[27px] flex items-center gap-[25px]">
        <svg width="4" height="8" viewBox="0 0 4 8"><path d="M4 0v8L0 4z" fill="#bbb" /></svg>
        <svg width="4" height="8" viewBox="0 0 4 8"><path d="M0 0v8l4-4z" fill="#bbb" /></svg>
      </div>
      <button className="-mt-px w-[76px] h-[25px] pb-[2px] leading-none bg-white border-x border-x-[#9b9b9b] border-b-2 border-b-[#217346] text-[15px] text-[#217346]">Sheet1</button>
      <button aria-label="新工作表" className="ml-[33px]">
        <svg width="16" height="16" viewBox="0 0 16 16" fill="none" stroke="#777">
          <circle cx="8" cy="8" r="7.300" />
          <path d="M4 8h8M8 4v8" strokeWidth="2" />
        </svg>
      </button>
      <div className="ml-auto w-[769px] pr-[22px] flex items-center">
        <div className="w-[16px] flex flex-col gap-[3px] *:w-[2px] *:h-[2px] *:bg-[#aaa]"><i /><i /><i /></div>
        <button aria-label="向左滚动" className="w-[17px] h-[17px] flex items-center justify-center border border-[#ababab] bg-white">
          <svg width="4" height="7" viewBox="0 0 4 7"><path d="M4 0v7L0 3.500z" fill="#666" /></svg>
        </button>
        <div className="flex-1 h-[17px] border border-l-2 border-[#ababab] bg-white" />
      </div>
    </div>
  )
}

function StatusBar() {
  return (
    <footer className="h-[23px] pr-[20px] flex items-center justify-end bg-[#f3f3f3]">
      <button aria-label="普通" className="mr-[27px]">
        <svg width="16" height="16" viewBox="0 0 16 16" fill="none" stroke="#666" shapeRendering="crispEdges"><path d="M.5.5h15v15H.5zM5.500.5v15M10.500.5v15M.5 5.500h15M.5 10.500h15" /></svg>
      </button>
      <button aria-label="页面布局" className="mr-[27px]">
        <svg width="17" height="16" viewBox="0 0 17 16" fill="none" stroke="#666" shapeRendering="crispEdges"><path d="M.5.5h16v15H.5zM4.500 2.500h8v11h-8zM6 5.500h5M6 7.500h5M6 9.500h5M6 11.500h5" /></svg>
      </button>
      <button aria-label="分页预览" className="mr-[21px]">
        <svg width="17" height="16" viewBox="0 0 17 16" fill="none" stroke="#666" shapeRendering="crispEdges"><path d="M.5.5h16v15H.5zM.5 9.500h10M5.500.5v9M10.500.5v9" /></svg>
      </button>
      <button aria-label="缩小" className="w-[9px] h-px bg-[#888] mr-[6px]" />
      <div className="w-[165px] h-px bg-[#aaa] flex items-center">
        <span className="ml-[55px] w-px h-[5px] bg-[#999]" />
      </div>
    </footer>
  )
}

function Hotkey({ k }: { k: string }) {
  return <>(<u>{k}</u>)</>
}

function CheckBox({ id, checked = false }: { id: string; checked?: boolean }) {
  return (
    <span className="relative w-[13px] h-[13px] shrink-0">
      <input id={id} type="checkbox" defaultChecked={checked} className="peer block appearance-none w-[13px] h-[13px] bg-white border border-[#222]" />
      <svg className="absolute inset-0 hidden peer-checked:block pointer-events-none" width="13" height="13" viewBox="0 0 13 13" fill="none" stroke="#222" strokeWidth="1.200">
        <path d="M2.500 6l3 3 5-6" />
      </svg>
    </span>
  )
}

function Chevron({ className }: Cls) {
  return (
    <svg className={className} width="9" height="6" viewBox="0 0 9 6" fill="none" stroke="#555" strokeWidth="1.600"><path d="M1.500 1l3 3 3-3" /></svg>
  )
}

function Preview() {
  return (
    <fieldset className="mt-[93px] border border-[#dcdcdc] pl-[10px] pr-[10px] pb-2 min-w-0">
      <legend className="h-[18px] leading-[18px] -ml-1">数据预览<Hotkey k="P" /></legend>
      <div className="mt-11 flex">
        <div className="w-[627px] h-[118px] overflow-hidden bg-white border-t border-r border-black">
          <table className="w-full h-full table-fixed border-separate border-spacing-0 text-xs leading-[17px] text-black text-left font-['Liberation_Mono','Noto_Sans_CJK_JP',monospace] whitespace-nowrap">
            <thead>
              <tr className="h-[19px]">
                {PREVIEW_HEAD.map((head, i) => (
                  <th key={head} className={clsx('p-0 align-bottom font-normal overflow-hidden border-l border-black', PREVIEW_WIDTHS[i])}>{head}</th>
                ))}
              </tr>
            </thead>
            <tbody>
              {PREVIEW_ROWS.map(row => (
                <tr key={row[0]} className="h-[17px]">
                  {row.map((cell, i) => (
                    <td key={i} className={clsx('p-0 border-l border-black', i === 2 && 'text-sm leading-[17px]')}>{cell}</td>
                  ))}
                </tr>
              ))}
              <tr>
                {PREVIEW_HEAD.map(head => <td key={head} className="p-0 border-l border-black" />)}
              </tr>
            </tbody>
          </table>
        </div>
        <div className="w-[17px] ml-px flex flex-col items-center">
          <button aria-label="向上滚动" className="h-[18px]"><Chevron className="rotate-180" /></button>
          <div className="w-full h-[19px] bg-[#cdcdcd]" />
          <button aria-label="向下滚动" className="h-[18px] mt-auto"><Chevron /></button>
        </div>
      </div>
      <div className="w-[628px] h-[17px] mt-px flex items-center">
        <button aria-label="向左滚动" className="w-[19px] flex justify-center"><Chevron className="rotate-90" /></button>
        <div className="w-[31px] h-full bg-[#cdcdcd]" />
        <button aria-label="向右滚动" className="w-[19px] ml-auto flex justify-center"><Chevron className="-rotate-90" /></button>
      </div>
    </fieldset>
  )
}

const DIALOG_BTN = 'h-8 border border-[#adadad] bg-[#e1e1e1]'

function ImportWizard() {
  return (
    <div
      role="dialog"
      aria-label="文本导入向导"
      className="absolute left-[617px] top-[190px] w-[683px] border border-[#9b9b9b] bg-[#f0f0f0] text-[13px] text-black shadow-[0_3px_14px_rgba(0,0,0,0.35)]"
    >
      <div className="h-8 pl-2 pr-[18px] flex items-center bg-white text-[#999]">
        <span>文本导入向导 - 第 2 步，共 3 步</span>
        <button aria-label="帮助" className="ml-auto mr-[41px] text-sm">?</button>
        <button aria-label="关闭">
          <svg width="11" height="11" viewBox="0 0 11 11" stroke="#888"><path d="M.500.500l10 10M10.500.500l-10 10" /></svg>
        </button>
      </div>

      <div className="pt-[9px] px-[7px] pb-[11px]">
        <p className="leading-5">请设置分列数据所包含的分隔符号。在预览窗口内可看到分列的效果。</p>

        <div className="mt-[17px] flex">
          <fieldset className="w-[143px] h-[181px] border border-[#dcdcdc] pl-[10px]">
            <legend className="h-[18px] leading-[18px] -ml-1">分隔符号</legend>
            <div className="pt-2">
              {DELIMITERS.map(d => (
                <div key={d.id} className="h-[29px] flex items-center gap-1">
                  <CheckBox id={d.id} checked={d.checked} />
                  <label htmlFor={d.id}>{d.label}<Hotkey k={d.hotkey} /></label>
                </div>
              ))}
              <div className="h-8 flex items-center gap-1">
                <CheckBox id="other" />
                <label htmlFor="other">其他<Hotkey k="O" />:</label>
                <input aria-label="其他分隔符" className="ml-auto mr-[9px] w-[42px] h-[29px] bg-white border border-[#ababab] outline-none" />
              </div>
            </div>
          </fieldset>

          <div className="ml-3 pt-[57px]">
            <div className="h-5 flex items-center gap-1">
              <CheckBox id="consecutive" />
              <label htmlFor="consecutive">连续分隔符号视为单个处理<Hotkey k="R" /></label>
            </div>
            <div className="mt-[19px] flex items-center gap-3">
              <label htmlFor="qualifier">文本识别符号<Hotkey k="Q" />:</label>
              <div className="relative w-[107px] h-[31px]">
                <select id="qualifier" className="appearance-none w-full h-full pl-1 pb-1 bg-white border border-[#ababab] outline-none">
                  <option>"</option>
                </select>
                <span className="absolute right-0 inset-y-0 w-5 flex items-center justify-center bg-[#e1e1e1] border border-r-2 border-b-2 border-[#ababab] pointer-events-none">
                  <Chevron />
                </span>
              </div>
            </div>
          </div>
        </div>

        <Preview />

        <div className="mt-[19px] flex justify-end whitespace-pre">
          <button className={clsx(DIALOG_BTN, 'w-[87px]')}>取消</button>
          <button className={clsx(DIALOG_BTN, 'w-[89px] ml-3')}>&lt; 上一步<Hotkey k="B" /></button>
          <button className="h-8 w-[92px] ml-3 border-2 border-[#0078d7] bg-[#e1e1e1]">下一步<Hotkey k="N" /> &gt;</button>
          <button className={clsx(DIALOG_BTN, 'w-[87px] ml-3')}>完成<Hotkey k="F" /></button>
        </div>
      </div>
    </div>
  )
}

/* Site stamp over the lower right corner */
function Watermark() {
  return (
    <svg className="absolute right-0 bottom-0 pointer-events-none" width="136" height="72" viewBox="0 0 136 72" fontFamily="Noto Sans CJK SC">
      <rect x="11" y="34" width="120" height="32" fill="#ececec" opacity=".7" />
      <rect x="24" y="20" width="90" height="42" fill="#666" opacity=".75" />
      <circle cx="30" cy="46" r="16" fill="#1189d6" />
      <path d="M20 36c10 0 18 8 20 22M24 32c10 2 18 10 20 22M17 42c8 0 14 6 16 18" stroke="#fff" strokeWidth="2" fill="none" opacity=".8" />
      <g fontWeight="900" paintOrder="stroke" strokeLinejoin="round">
        <text x="63" y="44" fontSize="17" fill="#fff" stroke="#1189d6" strokeWidth="4">足球吧</text>
        <text x="58" y="64" fontSize="13" fontFamily="Open Sans" fill="#fff" stroke="#1189d6" strokeWidth="3">soccerbar</text>
      </g>
      <text x="24" y="58" fontSize="13" fontWeight="700" fontStyle="italic" fontFamily="Open Sans" fill="#eee" stroke="#778" strokeWidth="2" paintOrder="stroke">www.lvyinba.com</text>
      <g fontWeight="500" stroke="#fdfbc4" strokeWidth="7" strokeOpacity=".85" paintOrder="stroke" strokeLinejoin="round">
        <text x="5" y="27" fontSize="17" fill="#ff7a00">绿茵吧</text>
        <text x="55" y="28" fontSize="14" fill="#ff7a00">.</text>
        <text x="59" y="28" fontSize="14" fill="#22b573">足球游戏网</text>
      </g>
    </svg>
  )
}

export default function App() {
  return (
    <div className="relative h-screen flex flex-col overflow-hidden bg-[#e6e6e6] font-['Open_Sans','Noto_Sans_CJK_SC',sans-serif]">
      <div className="bg-[#217346]">
        <TitleBar />
        <TabBar />
      </div>
      <Ribbon />
      <FormulaBar />
      <Sheet />
      <SheetTabs />
      <StatusBar />
      <div className="h-2 flex bg-linear-to-r from-[#6b403a] via-[#7d433a] to-[#6f3a33]">
        <div className="ml-auto mr-[283px] w-[139px] bg-[#b95122]" />
      </div>
      <ImportWizard />
      <Watermark />
    </div>
  )
}
